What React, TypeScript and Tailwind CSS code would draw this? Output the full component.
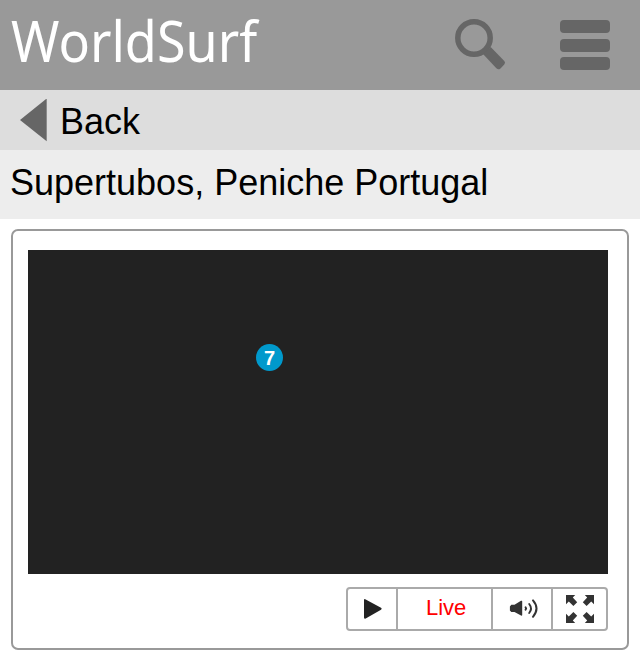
import React from 'react';

function SearchIcon() {
  return (
    <svg width="52" height="54" viewBox="0 0 52 54" aria-label="Search">
      <circle cx="19" cy="20" r="16.2" fill="none" stroke="#666" strokeWidth="5.5" />
      <path d="M28 36 L35.7 29 L49.3 43 Q50.9 44.8 49.2 46.6 L45.2 50.7 Q43.2 52.2 41.4 50.3 Z" fill="#666" />
    </svg>
  );
}

function SpeakerIcon() {
  return (
    <svg width="30" height="22" viewBox="0 0 30 22" aria-label="Volume">
      <path d="M2.3 6.8 H5.5 L12 2.8 Q13.2 2.3 13.2 3.3 V17 Q13.2 18 12 17.6 L5.5 14 H2.3 L.9 12.5 V8.4 Z" fill="#333" />
      <g fill="none" stroke="#333" strokeLinecap="round">
        <path d="M16.6 9.3 Q17.6 10.5 16.6 11.7" strokeWidth="2" />
        <path d="M20.2 6 Q23.8 10.5 20.2 15" strokeWidth="1.9" />
        <path d="M24 2.4 Q31 10.5 24 18.8" strokeWidth="2" />
      </g>
    </svg>
  );
}

function ExpandIcon() {
  const arrow = 'M0 0 H9.2 L6.8 2.6 L11.2 7.2 L7.4 11 L2.8 6.6 L0 9.2 Z';
  return (
    <svg width="28" height="28" viewBox="0 0 28 28" fill="#333" aria-label="Full screen">
      <path d={arrow} />
      <path d={arrow} transform="translate(28 0) scale(-1 1)" />
      <path d={arrow} transform="translate(0 28) scale(1 -1)" />
      <path d={arrow} transform="translate(28 28) scale(-1 -1)" />
    </svg>
  );
}

export default function App() {
  return (
    <div className="flex h-[653px] w-[640px] flex-col overflow-hidden bg-white font-['Liberation_Sans',Arial,sans-serif] text-black">
      <header className="flex h-[90px] shrink-0 items-start bg-[#999]">
        <h1 className="ml-[11px] w-[444px] origin-left scale-x-[0.93] whitespace-nowrap font-['Noto_Sans',sans-serif] text-[56px] leading-[80px] text-white">
          WorldSurf
        </h1>
        <div className="mt-[18px] flex items-start">
          <SearchIcon />
        </div>
        <div className="ml-[53px] mt-5 flex w-[50px] flex-col gap-[5.5px]">
          <div className="h-[13px] rounded-[4px] bg-[#666]" />
          <div className="h-[13px] rounded-[4px] bg-[#666]" />
          <div className="h-[13px] rounded-[4px] bg-[#666]" />
        </div>
      </header>

      <nav className="flex h-[60px] shrink-0 items-center bg-[#ddd] pl-5">
        <svg width="27" height="43" viewBox="0 0 27 43" aria-hidden="true">
          <path d="M0 21 L26.7 -.5 V42.3 Z" fill="#666" />
        </svg>
        <span className="ml-[13px] mt-[3px] text-[36px] leading-none">Back</span>
      </nav>

      <div className="flex h-[69px] shrink-0 items-center bg-[#ededed] pl-[10px]">
        <h2 className="mb-[3px] whitespace-nowrap text-[36px] leading-none">Supertubos, Peniche Portugal</h2>
      </div>

      <main className="ml-[11px] mt-[10px] h-[421px] w-[618px] rounded-[7px] border-2 border-[#999] pl-[15px] pt-[19px]">
        <div className="h-[324px] w-[580px] bg-[#222] pl-[228px] pt-[94px]">
          <div className="flex size-[27px] items-center justify-center rounded-full bg-[#09c] text-[20px] font-bold leading-none text-white">
            7
          </div>
        </div>
        <div className="ml-[318px] mt-[13px] flex h-[44px] w-[262px] rounded-[4px] border-2 border-[#aaa]">
          <div className="flex w-[50px] items-center border-r-2 border-[#aaa] pl-[16px]">
            <svg width="19" height="22" viewBox="0 0 19 22" aria-label="Play">
              <path d="M0 2.3 Q0 .4 1.7 1.4 L17 9.8 Q18.5 10.7 17 11.7 L1.7 20.4 Q0 21.2 0 19.5 Z" fill="#222" />
            </svg>
          </div>
          <div className="flex w-[95px] items-center border-r-2 border-[#aaa] pl-[28px] pb-[3px] text-[22px] leading-none text-[red]">Live</div>
          <div className="flex w-[60px] items-center border-r-2 border-[#aaa] pl-[16px]">
            <SpeakerIcon />
          </div>
          <div className="flex items-center pl-[13px]">
            <ExpandIcon />
          </div>
        </div>
      </main>
    </div>
  );
}
